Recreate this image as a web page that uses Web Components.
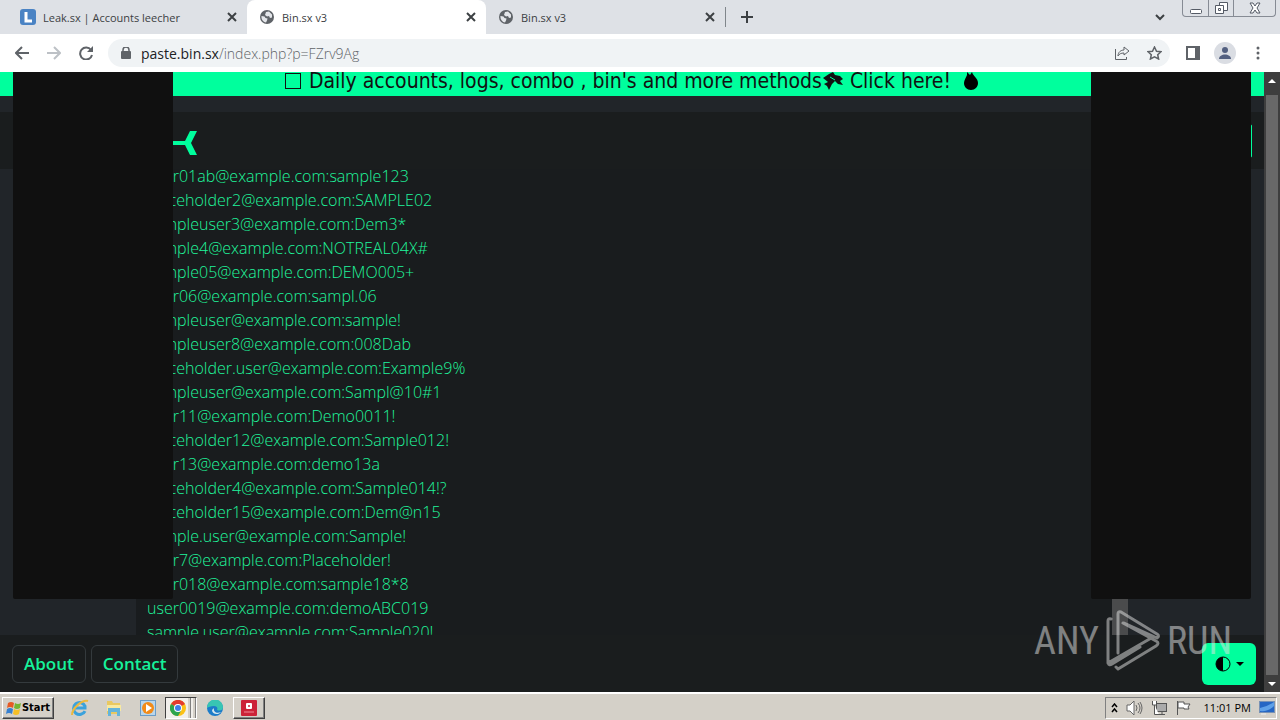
<!DOCTYPE html>
<html lang="en">
<head>
<meta charset="utf-8">
<title>Bin.sx v3</title>
<style>
  html, body { height: 100%; margin: 0; }
  body { overflow: hidden; font-family: "Open Sans", "Noto Sans", sans-serif; background: #212529; }
</style>
</head>
<body>
<desk-top>
  <tab-strip slot="window">
    <browser-tab icon="leak">Leak.sx | Accounts leecher</browser-tab>
    <browser-tab icon="globe" active>Bin.sx v3</browser-tab>
    <browser-tab icon="globe">Bin.sx v3</browser-tab>
  </tab-strip>
  <address-bar slot="window" host="paste.bin.sx" path="/index.php?p=FZrv9Ag"></address-bar>
  <paste-page slot="window"></paste-page>
  <task-bar slot="taskbar" time="11:01 PM"></task-bar>
</desk-top>

<script>
const globe = '<svg width="14" height="14" viewBox="0 0 14 14"><circle cx="7" cy="7" r="7" fill="#5f6368"/><path d="M1.500 6l3 .5 1 1.500 2 .5-.5 2-1 2C3 12 1 9 1.500 6zM6 2l3-.5 3 3v3l-2 .5-1-2-2 .5-2-1.500z" fill="#e4e6ea"/></svg>';
const leak = '<svg width="16" height="16" viewBox="0 0 16 16"><rect width="16" height="16" rx="3" fill="#4a83c4"/><path d="M6 3v9h6" fill="none" stroke="#fff" stroke-width="3"/></svg>';

class DeskTop extends HTMLElement {
  constructor() {
    super();
    this.attachShadow({ mode: 'open' }).innerHTML = `
      <style>
        :host { display: flex; flex-direction: column; height: 100vh; }
        main { flex: 1; min-height: 0; display: flex; flex-direction: column; }
      </style>
      <main><slot name="window"></slot></main>
      <slot name="taskbar"></slot>`;
  }
}
customElements.define('desk-top', DeskTop);

class TabStrip extends HTMLElement {
  constructor() {
    super();
    this.attachShadow({ mode: 'open' }).innerHTML = `
      <style>
        :host { display: flex; height: 34px; background: #dee1e6; padding-left: 8px; flex: none; }
        button { border: 0; background: none; padding: 0; display: flex; align-items: center; justify-content: center; }
        .new { width: 28px; margin-left: 8px; }
        .search { width: 24px; margin-left: auto; margin-right: 10px; }
        .win { display: flex; height: 17px; margin-right: 4px; border: 1px solid #868b94; border-top: 0; border-radius: 0 0 4px 4px; box-sizing: border-box; }
        .win button { width: 25px; }
        .win button + button { border-left: 1px solid #868b94; }
        .win button:last-child { width: 42px; }
      </style>
      <slot></slot>
      <button class="new" aria-label="New tab"><svg width="12" height="12"><path d="M6 0v12M0 6h12" stroke="#3c4043" stroke-width="2"/></svg></button>
      <button class="search" aria-label="Search tabs"><svg width="10" height="7"><path d="M1 1l4 4 4-4" fill="none" stroke="#3c4043" stroke-width="2"/></svg></button>
      <div class="win">
        <button aria-label="Minimize"><svg width="12" height="14"><rect x=".5" y="8.500" width="11" height="4" rx="1" fill="#fff" stroke="#555b66"/></svg></button>
        <button aria-label="Restore"><svg width="13" height="14"><path d="M4.500 1.500h8v8h-8z" fill="#fff" stroke="#555b66"/><path d="M.5 4.500h8v8h-8z" fill="#fff" stroke="#555b66"/><path d="M3.500 7.500h2v2h-2z" fill="none" stroke="#555b66"/></svg></button>
        <button aria-label="Close"><svg width="12" height="12"><path d="M1 1h3l2 3 2-3h3L8 6l3 5H8L6 8l-2 3H1l3-5z" fill="#fff" stroke="#555b66"/></svg></button>
      </div>`;
  }
}
customElements.define('tab-strip', TabStrip);

class BrowserTab extends HTMLElement {
  connectedCallback() {
    this.attachShadow({ mode: 'open' }).innerHTML = `
      <style>
        :host { display: flex; align-items: center; width: 239px; box-sizing: border-box; padding: 0 10px 0 12px; font-size: 11px; color: #3c4043; border-radius: 8px 8px 0 0; }
        :host([active]) { background: #fff; }
        .icon { width: 16px; height: 16px; margin-right: 7px; display: flex; align-items: center; justify-content: center; }
        .title { flex: 1; white-space: nowrap; }
        button { border: 0; background: none; padding: 0; width: 10px; height: 10px; display: flex; }
        i { width: 1px; height: 20px; background: #80868b; margin: 0 -11px 0 10px; }
      </style>
      <span class="icon">${this.getAttribute('icon') === 'leak' ? leak : globe}</span>
      <span class="title"><slot></slot></span>
      <button aria-label="Close tab"><svg width="10" height="10"><path d="M1 1l8 8M9 1l-8 8" stroke="#3c4043" stroke-width="2"/></svg></button>
      ${this.nextElementSibling ? '' : '<i></i>'}`;
  }
}
customElements.define('browser-tab', BrowserTab);

class AddressBar extends HTMLElement {
  connectedCallback() {
    this.attachShadow({ mode: 'open' }).innerHTML = `
      <style>
        :host { display: flex; align-items: center; height: 38px; flex: none; background: #fff; padding: 0 12px 0 6px; box-sizing: border-box; }
        button { border: 0; background: none; padding: 0; width: 32px; height: 28px; display: flex; align-items: center; justify-content: center; }
        .url { flex: 1; display: flex; align-items: center; height: 28px; margin: 0 8px 0 6px; padding-left: 13px; border-radius: 14px; background: #f0f3f5; font-size: 14px; font-weight: 300; color: #5f6368; }
        .url a { flex: 1; margin-left: 10px; color: inherit; text-decoration: none; }
        b { color: #202124; font-weight: 400; }
        .user { width: 22px; height: 22px; border-radius: 50%; background: #dadde3; margin-left: 6px; }
        .user + button { width: 20px; margin-left: 12px; }
        .side { width: 30px; }
      </style>
      <button aria-label="Back"><svg width="14" height="14"><path d="M14 7H1M7 1L1 7l6 6" fill="none" stroke="#5f6368" stroke-width="2"/></svg></button>
      <button aria-label="Forward"><svg width="14" height="14"><path d="M0 7h13M7 1l6 6-6 6" fill="none" stroke="#bdc1c6" stroke-width="2"/></svg></button>
      <button aria-label="Reload"><svg width="14" height="14"><path d="M12 4a6 6 0 1 0 1 5" fill="none" stroke="#5f6368" stroke-width="2"/><path d="M14 0v6H8z" fill="#5f6368"/></svg></button>
      <div class="url">
        <svg width="10" height="13"><path d="M2 6V3a3 3 0 0 1 6 0v3" fill="none" stroke="#5f6368" stroke-width="1.500"/><rect y="4" width="10" height="8" rx="1" fill="#5f6368"/></svg>
        <a href="#"><b>${this.getAttribute('host')}</b>${this.getAttribute('path')}</a>
        <button aria-label="Share"><svg width="15" height="14"><path d="M.5 3v10.500h11V11M3 10c0-4 3-6 6-6V1l5 4-5 4V7C6 7 4 8 3 10z" fill="none" stroke="#5f6368"/></svg></button>
        <button aria-label="Bookmark"><svg width="15" height="14" viewBox="0 0 15 14"><path d="M7.500 1l2 4.200 4.500.5-3.300 3 .9 4.300-4.100-2.200L3.400 13l.9-4.300L1 5.700l4.500-.5z" fill="none" stroke="#5f6368" stroke-width="1.500"/></svg></button>
      </div>
      <button class="side" aria-label="Side panel"><svg width="14" height="14"><rect x="1" y="1" width="12" height="12" fill="none" stroke="#5f6368" stroke-width="2"/><path d="M9 0h5v14H9z" fill="#5f6368"/></svg></button>
      <button class="user" aria-label="Profile"><svg width="12" height="13"><circle cx="6" cy="3" r="3" fill="#536080"/><path d="M0 12c0-6 12-6 12 0z" fill="#536080"/></svg></button>
      <button aria-label="Menu"><svg width="4" height="14" fill="#5f6368"><circle cx="2" cy="2" r="1.500"/><circle cx="2" cy="7" r="1.500"/><circle cx="2" cy="12" r="1.500"/></svg></button>`;
  }
}
customElements.define('address-bar', AddressBar);

// made-up rows, none of them belongs to anyone
const rows = [
  'user01ab@example.com:sample123',
  'placeholder2@example.com:SAMPLE02',
  'sampleuser3@example.com:Dem3*',
  'sample4@example.com:NOTREAL04X#',
  'sample05@example.com:DEMO005+',
  'user06@example.com:sampl.06',
  'sampleuser@example.com:sample!',
  'sampleuser8@example.com:008Dab',
  'placeholder.user@example.com:Example9%',
  'sampleuser@example.com:Sampl@10#1',
  'user11@example.com:Demo0011!',
  'placeholder12@example.com:Sample012!',
  'user13@example.com:demo13a',
  'placeholder4@example.com:Sample014!?',
  'placeholder15@example.com:Dem@n15',
  'sample.user@example.com:Sample!',
  'user7@example.com:Placeholder!',
  'user018@example.com:sample18*8',
  'user0019@example.com:demoABC019',
  'sample.user@example.com:Sample020!'
];

class AdPanel extends HTMLElement {
  constructor() {
    super();
    this.attachShadow({ mode: 'open' }).innerHTML = `
      <style>
        :host { position: absolute; top: 0; bottom: 93px; left: 13px; width: 160px; background: #101010; z-index: 2; border-radius: 0 0 2px 2px; }
        :host([right]) { left: auto; right: 29px; }
      </style>`;
  }
}
customElements.define('ad-panel', AdPanel);

class AnyRun extends HTMLElement {
  constructor() {
    super();
    this.attachShadow({ mode: 'open' }).innerHTML = `
      <style>
        :host { position: absolute; right: 48px; bottom: 20px; z-index: 4; display: flex; align-items: center; gap: 6px; height: 62px; opacity: .5; color: #e4e4e4; font: 400 38px "Roboto Condensed", Roboto, sans-serif; pointer-events: none; }
      </style>
      <span>ANY</span>
      <svg width="56" height="62" viewBox="0 0 56 62" fill="none" stroke="#e4e4e4" stroke-width="3" stroke-linejoin="round" stroke-linecap="round"><path d="M13 43V4q0-3 3-2l36 22q3 2 0 4L19 13M6 9Q3 8 3 11v42l45-26M3 53q1 3 4 1l28-17M13 59l38-23q4-3 0-5L18 13M13 59l-2-2"/></svg>
      <span>RUN</span>`;
  }
}
customElements.define('any-run', AnyRun);

class PastePage extends HTMLElement {
  constructor() {
    super();
    this.attachShadow({ mode: 'open' }).innerHTML = `
      <style>
        :host { display: flex; flex: 1; min-height: 0; position: relative; overflow: hidden; background: #212529; }
        .page { flex: 1; min-width: 0; display: flex; flex-direction: column; }
        .promo { height: 24px; flex: none; display: flex; justify-content: center; align-items: center; gap: 6px; background: #00ff9d; color: #111; font: 21px/24px "DejaVu Sans Condensed", "DejaVu Sans", sans-serif; text-decoration: none; white-space: pre; padding-bottom: 6px; box-sizing: border-box; }
        .promo span { display: flex; align-items: center; }
        .box { width: 14px; height: 14px; border: 1px solid #111; margin-right: 8px; }
        header { height: 57px; margin-top: 16px; flex: none; background: #1a1d1e; display: flex; align-items: center; justify-content: space-between; padding: 0 12px 0 159px; }
        header svg { margin-top: 4px; }
        header button { width: 40px; height: 34px; border: 1px solid #00ff9d; border-radius: 2px; background: none; }
        .paste { flex: 1; min-height: 0; margin: 0 136px; background: #191c1e; overflow: hidden; display: flex; }
        pre { flex: 1; margin: -5px 0 0; padding: 0 11px; font: 300 16px/24px "Open Sans", "Noto Sans", sans-serif; color: #20f59c; }
        .thumb { width: 16px; background: #4a4b4c; }
        footer { height: 57px; flex: none; background: #1a1d1e; display: flex; align-items: center; gap: 5px; padding: 0 8px 0 12px; box-sizing: border-box; }
        footer a { border: 1px solid #343a3d; border-radius: 6px; box-sizing: border-box; height: 38px; padding: 0 11px; font: 600 17px/36px "Open Sans", "Noto Sans", sans-serif; color: #16f29b; text-decoration: none; }
        footer button { margin-left: auto; width: 54px; height: 42px; border: 0; border-radius: 6px; background: #00ff9d; display: flex; align-items: center; justify-content: center; gap: 5px; padding: 0; }
        .bar { width: 16px; flex: none; background: #3e3e3e; display: flex; flex-direction: column; align-items: center; }
        .bar svg { flex: none; }
        .bar i { flex: 1; width: 12px; background: #686868; }
      </style>
      <div class="page">
        <a class="promo" href="#"><span><i class="box"></i>Daily accounts, logs, combo , bin's and more methods<svg width="22" height="20"><path d="M1 7l6-4 4-2 2 3 5 1 3 3-3 2 3 4-5-1-3-3-3 3-3 6-2-4-3-2 4-2z" fill="#111"/><path d="M8 6l5 3" stroke="#00ff9d"/></svg> Click here! </span><svg width="16" height="20"><path d="M4 1l3 3 2-3c1 4 6 6 6 11 0 4-3 7-7 7s-7-3-7-7c0-3 2-5 3-8z" fill="#000"/></svg></a>
        <header>
          <svg width="39" height="24" fill="#00ff9d"><path d="M0 10h26l5-10h7l-6 12 6 12h-7l-5-10H0z"/></svg>
          <button aria-label="Open menu"></button>
        </header>
        <div class="paste"><pre></pre><div class="thumb"></div></div>
        <footer>
          <a href="#">About</a><a href="#">Contact</a>
          <button aria-label="Theme"><svg width="16" height="16"><circle cx="8" cy="8" r="7" fill="none" stroke="#000" stroke-width="1"/><path d="M8 1a7 7 0 0 0 0 14z"/></svg><svg width="8" height="4"><path d="M0 0h8L4 4z"/></svg></button>
        </footer>
      </div>
      <div class="bar">
        <svg width="16" height="23"><path d="M4 11l4-4 4 4z" fill="#fff"/></svg><i></i>
        <svg width="16" height="17"><path d="M4 7l4 4 4-4z" fill="#fff"/></svg>
      </div>
      <ad-panel></ad-panel><ad-panel right></ad-panel>
      <any-run></any-run>`;
    this.shadowRoot.querySelector('pre').textContent = rows.join('\n');
  }
}
customElements.define('paste-page', PastePage);

class TaskBar extends HTMLElement {
  connectedCallback() {
    this.attachShadow({ mode: 'open' }).innerHTML = `
      <style>
        :host { display: flex; align-items: center; height: 28px; flex: none; box-sizing: border-box; border-top: 2px solid #fff; background: #d4d0c8; padding: 2px 3px 1px 2px; color: #000; }
        button { border: 0; background: none; padding: 0; height: 22px; display: flex; align-items: center; justify-content: center; box-sizing: border-box; }
        .start, .open { border: 1px solid; border-color: #fff #404040 #404040 #fff; box-shadow: inset -1px -1px #808080; }
        .start { width: 52px; font: bold 11px "DejaVu Sans Condensed", "DejaVu Sans", sans-serif; margin-right: 9px; }
        .app { width: 34px; }
        .chrome { width: 32px; border: 1px solid; border-color: #404040 #fff #fff #404040; background: #f1efeb; justify-content: flex-start; padding-left: 4px; gap: 2px; }
        .chrome i { width: 2px; height: 20px; background: #d4d0c8; border-right: 1px solid #808080; }
        .edge { width: 36px; }
        .open { width: 32px; }
        .tray { margin-left: auto; height: 22px; box-sizing: border-box; border: 1px solid; border-color: #808080 #fff #fff #808080; display: flex; align-items: center; gap: 8px; padding: 0 1px 0 5px; }
        time { margin-left: 5px; font-size: 11px; }
      </style>
      <button class="start"><svg width="16" height="16" viewBox="0 0 16 16"><path d="M2 3q3-2 6 0L7 8Q4 6 1 8z" fill="#e65a24"/><path d="M9 3q3 2 6 0l-1 5q-3 2-6 0z" fill="#73b532"/><path d="M1 9q3-2 6 0l-1 5q-3-2-6 0z" fill="#3680d0"/><path d="M8 9q3 2 6 0l-1 5q-3 2-6 0z" fill="#f5bf27"/></svg>Start</button>
      <button class="app" aria-label="Internet Explorer"><svg width="18" height="18" fill="none"><path d="M14 12a6 6 0 1 1 0-5v2H4" stroke="#3ba2dc" stroke-width="3"/><path d="M1 16C1 9 12 0 17 2" stroke="#ecb93d" stroke-width="2"/></svg></button>
      <button class="app" aria-label="Explorer"><svg width="18" height="18"><path d="M2 2h5l1 2h7v11H2z" fill="#e9c860"/><path d="M2 6h14v6H2z" fill="#f8e9a0"/><path d="M3 9h12v8h-3v-4H6v4H3z" fill="#65b4da"/></svg></button>
      <button class="app" aria-label="Media Player"><svg width="16" height="16"><rect x=".5" y=".5" width="15" height="15" fill="#b9d6eb" stroke="#6a9cc7"/><circle cx="8" cy="8" r="6" fill="#f28b18"/><path d="M6 4l6 4-6 4z" fill="#fff"/></svg></button>
      <button class="chrome" aria-label="Chrome"><svg width="16" height="16" viewBox="0 0 16 16"><circle cx="8" cy="8" r="8" fill="#fbc116"/><path d="M8 8L1 4a8 8 0 0 1 14 0z" fill="#e33b2e"/><path d="M8 8L1 4a8 8 0 0 0 7 12l3-5z" fill="#2da44e"/><circle cx="8" cy="8" r="4" fill="#fff"/><circle cx="8" cy="8" r="3" fill="#3f7fe8"/></svg><i></i><i></i></button>
      <button class="edge" aria-label="Edge"><svg width="16" height="16" viewBox="0 0 16 16"><circle cx="8" cy="8" r="8" fill="#1c7cc9"/><path d="M0 8a8 8 0 0 1 16-1c0 4-4 4-6 3 1-2 0-4-3-4S1 7 0 8z" fill="#38c5b3"/><path d="M7 8c-1 4 3 6 7 4-2 3-9 3-9-2z" fill="#d4e7ee"/></svg></button>
      <button class="open" aria-label="Recorder"><svg width="16" height="16"><rect width="16" height="16" rx="1" fill="#cc2238"/><rect x="5" y="3" width="6" height="6" rx="1" fill="#fff"/><circle cx="8" cy="6" r="1" fill="#cc2238"/><path d="M3 12h10" stroke="#f08b98"/></svg></button>
      <div class="tray">
        <svg width="7" height="10" fill="none" stroke="#000" stroke-width="1.500"><path d="M1 4l2.500-3L6 4M1 9l2.500-3L6 9"/></svg>
        <svg width="17" height="16" fill="none" stroke="#666"><path d="M1 5h3l4-4v14l-4-4H1z" fill="#fff"/><path d="M10 5q2 3 0 6M12 3q4 5 0 10M14 2q4 6 0 12"/></svg>
        <svg width="16" height="16" fill="#fff" stroke="#555"><rect x="5.500" y="3.500" width="10" height="8" fill="#aaa"/><path d="M8 14.500h6M1.500 1v4h4V1M3.500 5v9.500H8M11 12v2"/></svg>
        <svg width="16" height="16" fill="#fff" stroke="#555"><path d="M2.500 1v14M3 2h6v2h6l-2 3 1 2H9V8H3z"/></svg>
        <time>${this.getAttribute('time')}</time>
        <svg width="16" height="14"><rect x=".5" y=".5" width="15" height="11" fill="#2566c4" stroke="#7892b5"/><path d="M1 7Q8 6 15 1v4Q9 11 1 10z" fill="#5fa1e8"/><path d="M2 13h5" stroke="#eee"/></svg>
      </div>`;
  }
}
customElements.define('task-bar', TaskBar);
</script>
</body>
</html>
